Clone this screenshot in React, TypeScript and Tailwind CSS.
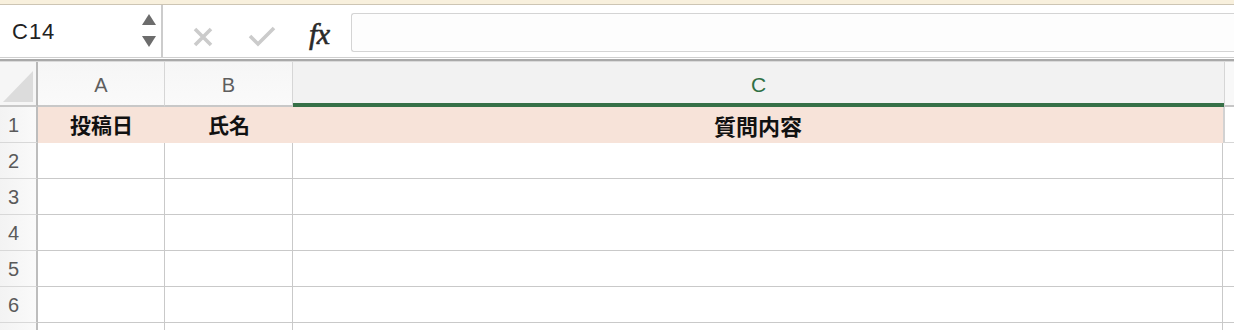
import React from "react";

const font = { fontFamily: '"Liberation Sans", Arial, sans-serif' };
const jp = { fontFamily: '"Noto Sans CJK JP", "Noto Sans", sans-serif' };

function RowHeader({ n }: { n?: number }) {
  return (
    <div className="w-[38px] shrink-0 h-full border-r-2 border-r-[#bdbdbd] border-b border-b-[#d8d8d8] bg-linear-to-r from-[#f3f3f3] to-[#fafafa] flex items-center pl-[8px] text-[20px] text-[#5a5a5a]" style={font}>
      {n}
    </div>
  );
}

function DataRow({ n }: { n?: number }) {
  return (
    <div className="flex h-[36px] shrink-0">
      <RowHeader n={n} />
      <div className="w-[127px] shrink-0 border-r border-b border-[#c9c9c9] bg-white" />
      <div className="w-[128px] shrink-0 border-r border-b border-[#c9c9c9] bg-white" />
      <div className="w-[930px] shrink-0 border-r border-b border-[#c9c9c9] bg-white" />
      <div className="flex-1 border-b border-[#c9c9c9] bg-white" />
    </div>
  );
}

export default function App() {
  return (
    <div className="w-[1234px] h-[330px] overflow-hidden bg-white flex flex-col" style={font}>
      {/* top strip */}
      <div className="h-[5px] shrink-0 bg-[#f8f0dd] border-b border-b-[#cdc5b4]" />
      {/* formula bar */}
      <div className="h-[53px] shrink-0 flex bg-white border-b border-b-[#cfcfcf]">
        <div className="w-[163px] shrink-0 flex items-center border-r-2 border-r-[#cccccc] pl-[12px] pr-[3px]">
          <span className="text-[22px] text-[#222] tracking-[1px] mt-[1px]">C14</span>
          <div className="ml-auto flex flex-col items-center gap-[11px] mr-[2px] -mt-[1px]">
            <svg width="14" height="11" viewBox="0 0 14 11"><polygon points="7,0 14,11 0,11" fill="#6c6c6c" /></svg>
            <svg width="14" height="11" viewBox="0 0 14 11"><polygon points="0,0 14,0 7,11" fill="#6c6c6c" /></svg>
          </div>
        </div>
        <div className="flex items-center pl-[30px]">
          <svg width="20" height="20" viewBox="0 0 20 20" className="mt-[12px]">
            <path d="M2 2 L18 18 M18 2 L2 18" stroke="#cbcbcb" strokeWidth="3.6" strokeLinecap="butt" />
          </svg>
          <svg width="28" height="21" viewBox="0 0 28 21" className="ml-[35px] mt-[11px]">
            <path d="M2 10 L10 18 L26 2" stroke="#cbcbcb" strokeWidth="3.6" fill="none" strokeLinejoin="miter" />
          </svg>
          <span className="ml-[33px] text-[30px] italic text-[#2a2a2a] leading-none mt-[5px] tracking-[-0.5px] [-webkit-text-stroke:0.6px_#2a2a2a]" style={{ fontFamily: '"Liberation Serif", "Times New Roman", serif' }}>
            fx
          </span>
        </div>
        <div className="ml-[21px] flex-1 mt-[8px] mb-[5px] rounded-l-[3px] border border-[#d4d4d4] border-r-0 bg-[#fdfdfd]" />
      </div>
      {/* separator lines */}
      <div className="h-[1px] shrink-0 bg-white" />
      <div className="h-[2px] shrink-0 bg-[#a9a9a9]" />
      <div className="h-[1px] shrink-0 bg-[#dadada]" />
      {/* column headers */}
      <div className="flex h-[45px] shrink-0">
        <div className="w-[38px] shrink-0 border-r-2 border-r-[#b8b8b8] border-b-2 border-b-[#c8c8c8] bg-[#f6f6f6] flex items-end pl-[3px] pb-[3px]">
          <svg width="30" height="31" viewBox="0 0 30 31"><polygon points="30,0 30,31 0,31" fill="#dcdcdc" /></svg>
        </div>
        <div className="w-[127px] shrink-0 border-r border-r-[#d6d6d6] border-b-2 border-b-[#c8c8c8] bg-linear-to-b from-[#f6f6f6] to-[#fafafa] flex items-center justify-center text-[20px] text-[#5e5e5e] pt-[3px]">
          A
        </div>
        <div className="w-[128px] shrink-0 border-r border-r-[#d6d6d6] border-b-2 border-b-[#c8c8c8] bg-linear-to-b from-[#f6f6f6] to-[#fafafa] flex items-center justify-center text-[20px] text-[#5e5e5e] pt-[3px]">
          B
        </div>
        <div className="w-[931px] shrink-0 border-b-4 border-b-[#367047] bg-[#f2f2f2] flex items-center justify-center text-[21px] text-[#2f7045] pt-[4px]">
          C
        </div>
        <div className="flex-1 border-l border-l-[#d6d6d6] border-b-2 border-b-[#c6c6c6] bg-[#f8f8f8]" />
      </div>
      {/* row 1 */}
      <div className="flex h-[36px] shrink-0">
        <RowHeader n={1} />
        <div className="w-[127px] shrink-0 bg-[#f7e3d9] flex items-center justify-center text-[21px] font-bold text-[#111]" style={jp}>
          投稿日
        </div>
        <div className="w-[128px] shrink-0 bg-[#f7e3d9] flex items-center justify-center text-[21px] font-bold text-[#111]" style={jp}>
          氏名
        </div>
        <div className="w-[930px] shrink-0 bg-[#f7e3d9] flex items-center justify-center text-[22px] font-bold text-[#111]" style={jp}>
          質問内容
        </div>
        <div className="flex-1 border-l-2 border-l-[#d2d2d2] border-b border-b-[#d6d6d6] bg-white" />
      </div>
      <DataRow n={2} />
      <DataRow n={3} />
      <DataRow n={4} />
      <DataRow n={5} />
      <DataRow n={6} />
      <DataRow />
    </div>
  );
}
